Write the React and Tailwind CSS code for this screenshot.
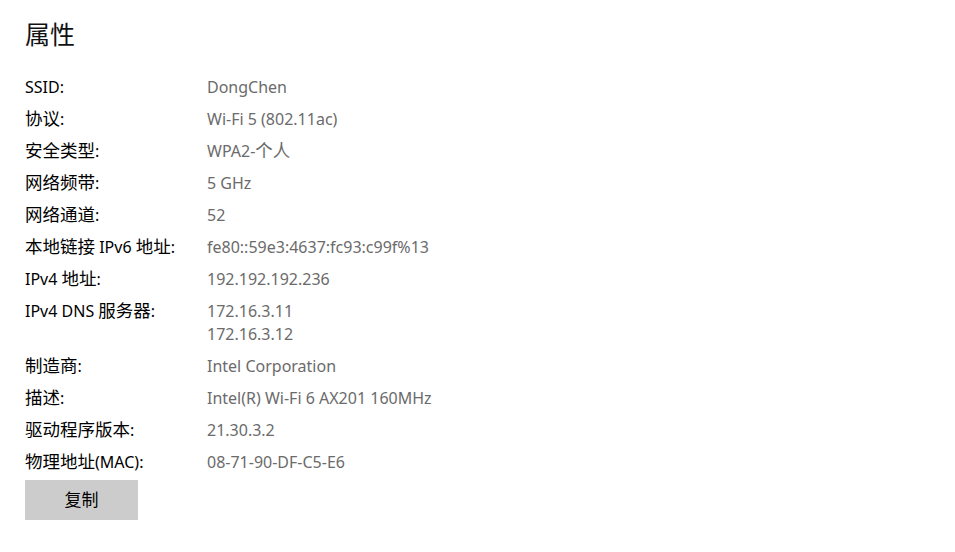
const rows = [
  ['SSID:', ['DongChen']],
  ['协议:', ['Wi-Fi 5 (802.11ac)']],
  ['安全类型:', ['WPA2-个人']],
  ['网络频带:', ['5 GHz']],
  ['网络通道:', ['52']],
  ['本地链接 IPv6 地址:', ['fe80::59e3:4637:fc93:c99f%13']],
  ['IPv4 地址:', ['192.192.192.236']],
  ['IPv4 DNS 服务器:', ['172.16.3.11', '172.16.3.12']],
  ['制造商:', ['Intel Corporation']],
  ['描述:', ['Intel(R) Wi-Fi 6 AX201 160MHz']],
  ['驱动程序版本:', ['21.30.3.2']],
  ['物理地址(MAC):', ['08-71-90-DF-C5-E6']],
];

// CJK glyphs render a bit larger than the latin ones in the original
const Mixed = ({ text }) =>
  text.split(/([\u4e00-\u9fff]+)/).map((part, i) =>
    /[\u4e00-\u9fff]/.test(part) ? (
      <span key={i} className="text-[17.5px] leading-[16px]">{part}</span>
    ) : (
      <span key={i}>{part}</span>
    )
  );

export default function App() {
  return (
    <div className="w-[955px] h-[552px] bg-white overflow-hidden px-[25px] pt-[16px] font-['Noto_Sans','Noto_Sans_CJK_SC',sans-serif]">
      <h1 className="text-[25px] leading-[36px] text-[#111] font-normal">属性</h1>
      <div className="mt-[24px] flex flex-col gap-[9px]">
        {rows.map(([label, values]) => (
          <div key={label} className="flex text-[16px] leading-[23px]">
            <div className="w-[182px] h-[23px] shrink-0 text-black whitespace-nowrap">
              <Mixed text={label} />
            </div>
            <div className="flex flex-col text-[#6b6b6b] whitespace-nowrap">
              {values.map((v) => (
                <div key={v} className="h-[23px]">
                  <Mixed text={v} />
                </div>
              ))}
            </div>
          </div>
        ))}
      </div>
      <button className="mt-[6px] w-[113px] h-[40px] bg-[#cccccc] text-[17px] text-black">复制</button>
    </div>
  );
}
